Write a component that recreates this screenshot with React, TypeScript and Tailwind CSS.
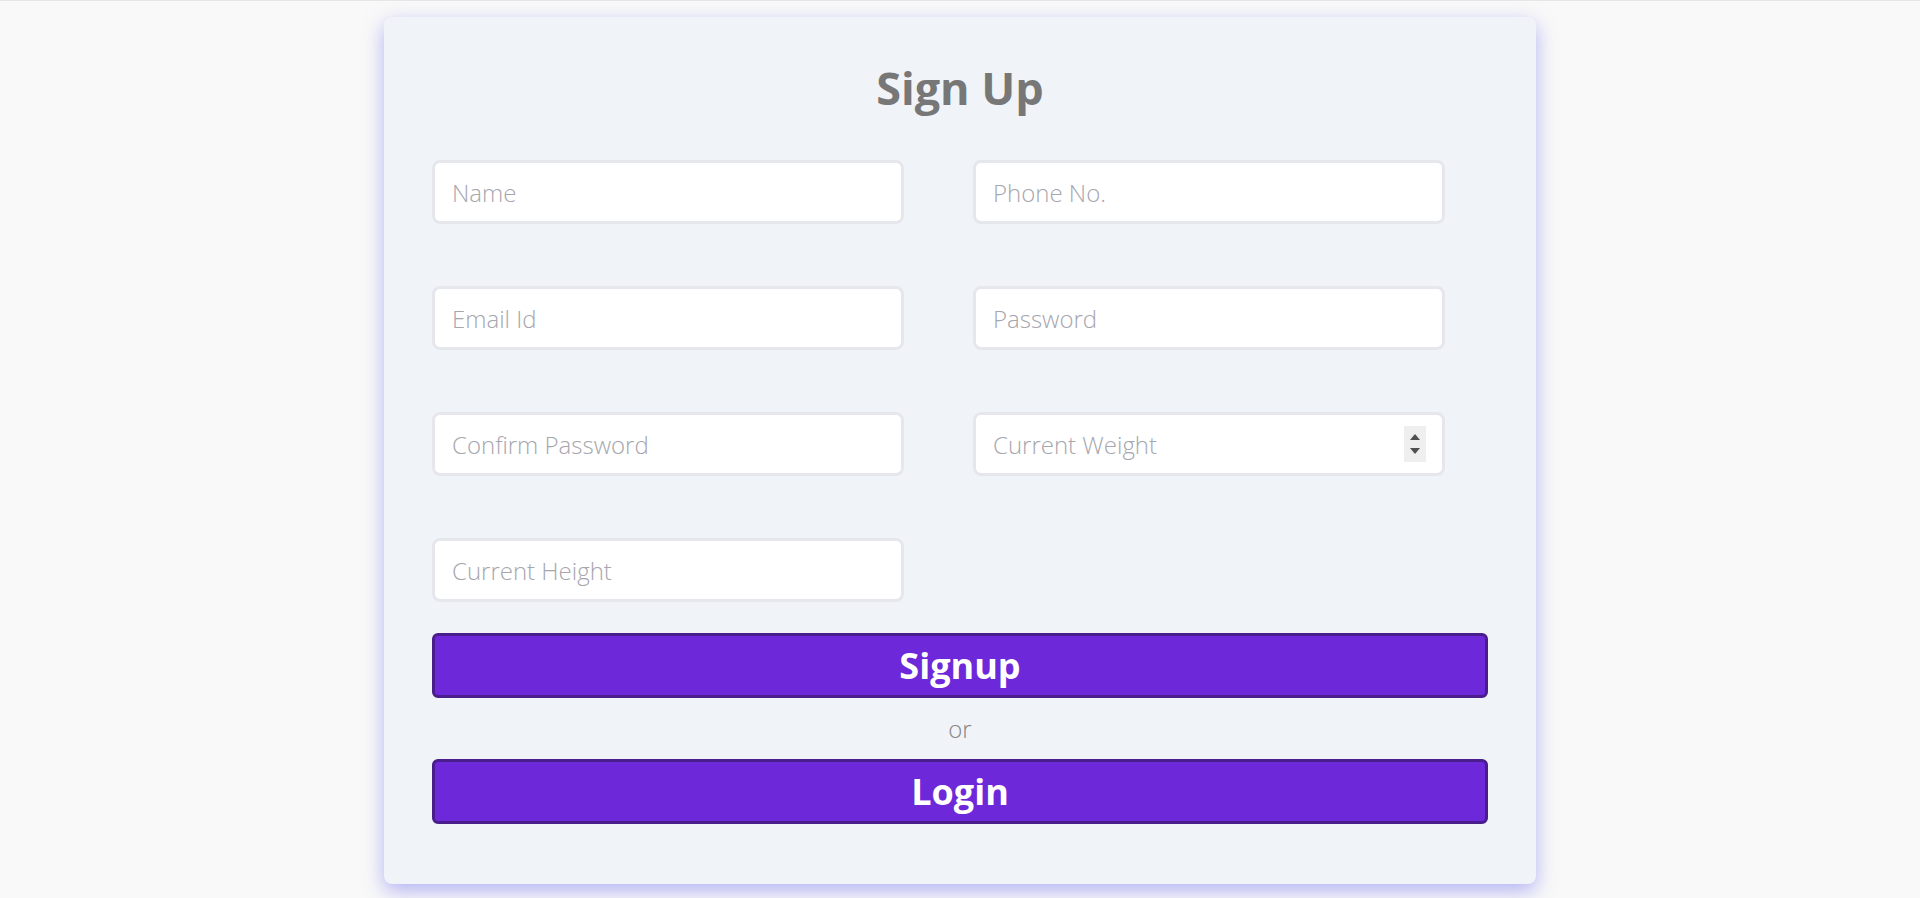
import { useState } from "react";

type Field = {
  name: string;
  placeholder: string;
  type: string;
};

const fields: Field[] = [
  { name: "name", placeholder: "Name", type: "text" },
  { name: "phone", placeholder: "Phone No.", type: "tel" },
  { name: "email", placeholder: "Email Id", type: "email" },
  { name: "password", placeholder: "Password", type: "password" },
  { name: "confirmPassword", placeholder: "Confirm Password", type: "password" },
  { name: "weight", placeholder: "Current Weight", type: "number" },
  { name: "height", placeholder: "Current Height", type: "text" },
];

export default function App() {
  const [values, setValues] = useState<Record<string, string>>({});

  const update = (key: string, value: string) =>
    setValues((prev) => ({ ...prev, [key]: value }));

  return (
    <div className="min-h-[898px] w-full border-t border-[#e6e6e6] bg-[#f9f9f9] pt-[16px] font-['Open_Sans',sans-serif]">
      <form
        onSubmit={(e) => e.preventDefault()}
        className="mx-auto w-[1152px] rounded-[8px] bg-[#f0f4f9] px-12 pb-[60px] pt-[38px] shadow-[0_7px_20px_rgba(110,110,240,0.5)]"
      >
        <h1 className="text-center text-[45px] font-bold leading-[66px] text-[#777777]">Sign Up</h1>

        <div className="mt-[39px] grid grid-cols-[472px_472px] gap-x-[69px] gap-y-[62px]">
          {fields.map((f) => (
            <div key={f.name} className="relative">
              <input
                type={f.type}
                name={f.name}
                value={values[f.name] || ""}
                onChange={(e) => update(f.name, e.target.value)}
                placeholder={f.placeholder}
                className="h-[64px] w-full rounded-[8px] border-[3px] border-[#e5e7ed] bg-white px-[17px] text-[24px] font-light text-[#444] outline-none placeholder:text-[#a6a6ae] [appearance:textfield] [&::-webkit-inner-spin-button]:appearance-none [&::-webkit-outer-spin-button]:appearance-none"
              />
              {f.type === "number" ? (
                <div className="pointer-events-none absolute right-[19px] top-[14px] flex h-[36px] w-[22px] flex-col items-center justify-center gap-[8px] bg-[#efefef]">
                  <svg width="10" height="6" viewBox="0 0 10 6">
                    <path d="M0 6 L5 0 L10 6 Z" fill="#505050" />
                  </svg>
                  <svg width="10" height="6" viewBox="0 0 10 6">
                    <path d="M0 0 L5 6 L10 0 Z" fill="#505050" />
                  </svg>
                </div>
              ) : null}
            </div>
          ))}
        </div>

        <button
          type="submit"
          className="mt-[31px] flex h-[65px] w-full items-center justify-center rounded-[6px] border-[3px] border-[#4a1d8c] bg-[#6d28d9] text-[36px] font-bold text-white"
        >
          Signup
        </button>
        <p className="flex h-[61px] items-center justify-center text-[24px] font-light text-[#858585]">or</p>
        <button
          type="button"
          className="flex h-[65px] w-full items-center justify-center rounded-[6px] border-[3px] border-[#4a1d8c] bg-[#6d28d9] text-[36px] font-bold text-white"
        >
          Login
        </button>
      </form>
    </div>
  );
}
